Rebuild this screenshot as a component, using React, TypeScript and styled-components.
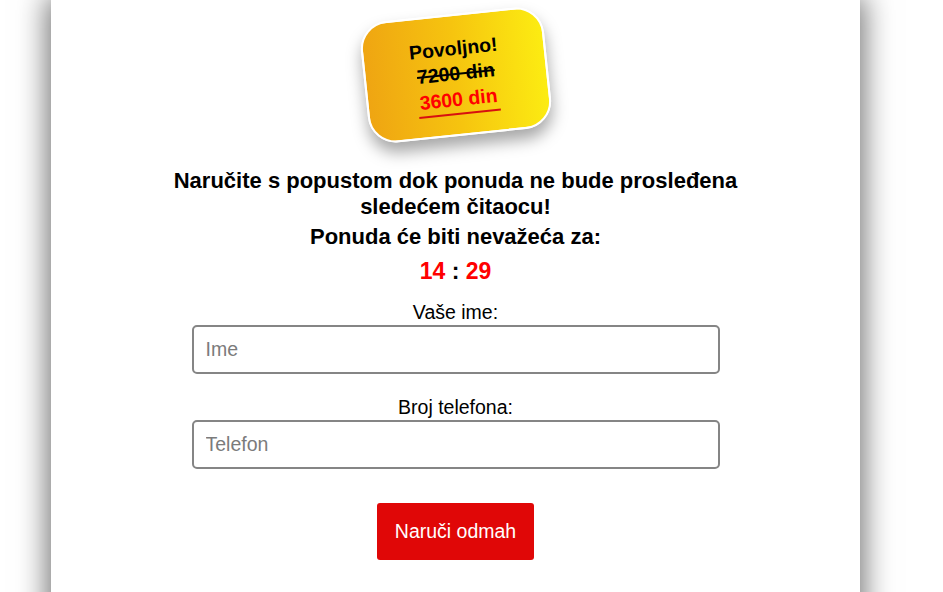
import React from "react";
import styled, { createGlobalStyle } from "styled-components";

const GlobalStyle = createGlobalStyle`
  html, body {
    margin: 0;
    padding: 0;
    background: #ffffff;
    font-family: "Liberation Sans", Arial, sans-serif;
    color: #000;
  }
`;

const Page = styled.div`
  display: flex;
  justify-content: center;
  height: 592px;
  overflow: hidden;
`;

const Panel = styled.div`
  width: 809px;
  margin-left: 51px;
  margin-right: auto;
  background: #fff;
  box-shadow: 0 0 28px 4px rgba(0, 0, 0, 0.55);
  display: flex;
  flex-direction: column;
  align-items: center;
  padding-top: 14px;
  min-height: 620px;
`;

const Badge = styled.div`
  width: 184px;
  height: 122px;
  box-sizing: border-box;
  border: 2px solid #fff;
  border-radius: 28px;
  background: linear-gradient(90deg, #efa512 0%, #f6c40f 50%, #fcec12 100%);
  box-shadow: 0 10px 16px rgba(0, 0, 0, 0.35);
  transform: rotate(-6deg);
  display: flex;
  flex-direction: column;
  align-items: center;
  justify-content: center;
  font-weight: bold;
  font-size: 19.5px;
  line-height: 25px;
`;

const OldPrice = styled.span`
  text-decoration: line-through;
  text-decoration-thickness: 2px;
`;

const NewPrice = styled.span`
  color: #f00;
  border-bottom: 2px solid #d71010;
  padding: 0 2px 3px;
  line-height: 22px;
  margin-top: 2px;
`;

const Headline = styled.h2`
  margin: 32px 0 0;
  max-width: 610px;
  text-align: center;
  font-size: 22px;
  line-height: 26px;
  font-weight: bold;
`;

const SubHeadline = styled.h3`
  margin: 4px 0 0;
  font-size: 22px;
  line-height: 26px;
  font-weight: bold;
`;

const Timer = styled.div`
  margin-top: 7px;
  font-size: 23px;
  line-height: 28px;
  font-weight: bold;
`;

const Digits = styled.span`
  color: #f00;
`;

const Form = styled.form`
  margin-top: 16px;
  width: 528px;
  display: flex;
  flex-direction: column;
  align-items: center;
`;

const Field = styled.label`
  display: flex;
  flex-direction: column;
  align-items: center;
  width: 100%;
  font-size: 19.5px;
  line-height: 22px;
  margin-bottom: 22px;
`;

const Input = styled.input`
  margin-top: 2px;
  width: 100%;
  height: 49px;
  box-sizing: border-box;
  border: 2px solid #858585;
  border-radius: 5px;
  padding: 0 12px;
  font-family: "Liberation Sans", Arial, sans-serif;
  font-size: 19.5px;
  color: #000;
  outline: none;
  &::placeholder {
    color: #7b7b7b;
  }
`;

const Button = styled.button`
  margin-top: 12px;
  width: 157px;
  height: 57px;
  border: none;
  border-radius: 3px;
  background: #e00707;
  color: #fff;
  font-family: "Liberation Sans", Arial, sans-serif;
  font-size: 19.5px;
  cursor: pointer;
`;

export default function App() {
  return (
    <Page>
      <GlobalStyle />
      <Panel>
        <Badge>
          <span>Povoljno!</span>
          <OldPrice>7200 din</OldPrice>
          <NewPrice>3600 din</NewPrice>
        </Badge>
        <Headline>Naručite s popustom dok ponuda ne bude prosleđena sledećem čitaocu!</Headline>
        <SubHeadline>Ponuda će biti nevažeća za:</SubHeadline>
        <Timer>
          <Digits>14</Digits> : <Digits>29</Digits>
        </Timer>
        <Form onSubmit={e => e.preventDefault()}>
          <Field>
            Vaše ime:
            <Input type="text" placeholder="Ime" />
          </Field>
          <Field>
            Broj telefona:
            <Input type="tel" placeholder="Telefon" />
          </Field>
          <Button type="submit">Naruči odmah</Button>
        </Form>
      </Panel>
    </Page>
  );
}
